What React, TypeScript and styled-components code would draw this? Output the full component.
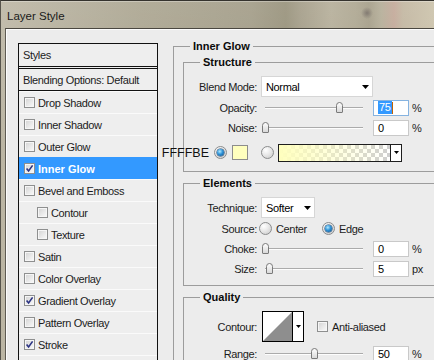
import React from "react";
import styled, { createGlobalStyle, css } from "styled-components";

const UI_FONT = `"Liberation Sans", Arial, sans-serif`;

const GlobalStyle = createGlobalStyle`
  * { box-sizing: border-box; }
  html, body { margin: 0; padding: 0; overflow: hidden; background: #ececec; }
  #root { width: 434px; height: 360px; }
`;

const Window = styled.div`
  width: 434px;
  height: 360px;
  overflow: hidden;
  display: flex;
  flex-direction: column;
  border-top: 1px solid #35332e;
  border-left: 1px solid #57544c;
  font-family: ${UI_FONT};
  background:
    radial-gradient(circle at 366px 12px, rgba(80, 70, 75, 0.45) 0, rgba(80, 70, 75, 0) 6px),
    linear-gradient(180deg, rgba(255, 255, 255, 0.1), rgba(255, 255, 255, 0) 40%),
    linear-gradient(
      90deg,
      #bcb6a4 0px,
      #b4ae9b 60px,
      #aaa48f 140px,
      #a59f8a 200px,
      #a19b86 250px,
      #969079 285px,
      #a39c87 300px,
      #b4ad98 330px,
      #aca58f 355px,
      #a39c86 368px,
      #b3ac96 380px,
      #c2a797 393px,
      #c1b59f 402px,
      #cbc2aa 434px
    );
`;

const TitleBar = styled.div`
  height: 27px;
  flex: none;
  display: flex;
  align-items: center;
  padding: 2px 0 0 6px;
  font-size: 11.5px;
  color: #1a1a1a;
  box-shadow: inset 0 1px 0 rgba(255, 255, 255, 0.3);
`;

const Body = styled.div`
  flex: 1;
  min-height: 0;
  overflow: hidden;
  margin-left: 4px;
  display: flex;
  align-items: flex-start;
  gap: 15px;
  padding: 11px 0 0 12px;
  background: #ececec;
  border-left: 1px solid #5e5b53;
  border-top: 1px solid #4a4740;
  box-shadow: inset 1px 1px 0 #fdfdfd;
`;

/* ---------- left style list ---------- */

const StyleList = styled.div`
  width: 140px;
  flex: none;
  margin-top: 3px;
  min-height: 340px;
  border: 1px solid #111;
  background: #eeeeee;
`;

const baseText = css`
  font-size: 11px;
  letter-spacing: -0.35px;
  color: #1c1c1c;
  white-space: nowrap;
`;

const ListHeader = styled.div<{ $h: number; $double?: boolean }>`
  ${baseText};
  height: ${(p) => p.$h}px;
  display: flex;
  align-items: center;
  padding-left: 4px;
  border-bottom: ${(p) => (p.$double ? "3px double #111" : "1px solid #111")};
  box-sizing: content-box;
`;

const EffectRow = styled.div<{ $indent?: boolean; $selected?: boolean }>`
  ${baseText};
  height: 22px;
  display: flex;
  align-items: center;
  gap: 3px;
  padding-left: ${(p) => (p.$indent ? 18 : 5)}px;
  border-top: 1px solid #fafafa;
  ${(p) =>
    p.$selected &&
    css`
      background: #3399ff;
      border-top-color: #3399ff;
      color: #ffffff;
      font-weight: bold;
      letter-spacing: 0;
    `}
`;

const CheckBox = styled.span`
  width: 11px;
  height: 11px;
  flex: none;
  display: flex;
  align-items: center;
  justify-content: center;
  border: 1px solid #8e8f8f;
  background: linear-gradient(135deg, #d2d2d2 0%, #e9e9e9 55%, #fbfbfb 100%);
  box-shadow: inset 0 0 0 1px #f6f6f6;
`;

const Check: React.FC<{ on?: boolean }> = ({ on }) => (
  <CheckBox>
    {on && (
      <svg width="9" height="9" viewBox="0 0 9 9">
        <path d="M1.6 4.4 L3.6 7 L7.6 1.4" fill="none" stroke="#2b3383" strokeWidth="1.6" />
      </svg>
    )}
  </CheckBox>
);

/* ---------- right settings panel ---------- */

const Group = styled.fieldset<{ $wide?: boolean }>`
  margin: 0;
  padding: 0;
  min-width: 0;
  border: 1px solid #9c9c9c;
  ${(p) =>
    p.$wide &&
    css`
      width: 290px;
      flex: none;
    `}
`;

const Legend = styled.legend`
  margin-left: 16px;
  padding: 0 3px;
  font: bold 11px/13px ${UI_FONT};
  color: #0a0a0a;
`;

const GroupStack = styled.div`
  display: flex;
  flex-direction: column;
  gap: 5px;
  padding: 3px 9px 0 9px;
`;

const Rows = styled.div<{ $pt: number; $pb: number }>`
  display: flex;
  flex-direction: column;
  padding: ${(p) => p.$pt}px 0 ${(p) => p.$pb}px 0;
`;

const Row = styled.div<{ $h: number; $mt?: number }>`
  height: ${(p) => p.$h}px;
  margin-top: ${(p) => p.$mt ?? 0}px;
  display: flex;
  align-items: center;
`;

const Label = styled.span`
  ${baseText};
  width: 73px;
  flex: none;
  margin-right: 4px;
  text-align: right;
`;

const Select = styled.div<{ $w: number }>`
  ${baseText};
  color: #000;
  width: ${(p) => p.$w}px;
  height: 21px;
  flex: none;
  display: flex;
  align-items: center;
  justify-content: space-between;
  padding: 0 3px 0 4px;
  background: #fff;
  border: 1px solid #d6d6d6;
`;

const Arrow: React.FC<{ w?: number }> = ({ w = 7 }) => (
  <svg width={w} height={Math.ceil(w / 2)} viewBox={`0 0 ${w} ${Math.ceil(w / 2)}`}>
    <polygon points={`0,0 ${w},0 ${w / 2},${Math.ceil(w / 2)}`} fill="#000" />
  </svg>
);

const SliderWrap = styled.div`
  position: relative;
  width: 106px;
  height: 12px;
  flex: none;
  margin-right: 6px;
  display: flex;
  align-items: center;
  padding: 0 4px;
`;

const Track = styled.div`
  flex: 1;
  height: 2px;
  border-top: 1px solid #ababab;
  border-bottom: 1px solid #fdfdfd;
`;

const Thumb = styled.div`
  position: absolute;
  top: 0;
  width: 7px;
  height: 11px;
  border: 1px solid #7a7a7a;
  border-radius: 3.5px 3.5px 1px 1px;
  background: linear-gradient(180deg, #fdfdfd, #d9d9d9);
`;

const Slider: React.FC<{ pct: number }> = ({ pct }) => (
  <SliderWrap>
    <Track />
    <Thumb style={{ left: `${1 + (pct / 100) * 97}px` }} />
  </SliderWrap>
);

const NumBox = styled.div<{ $focus?: boolean }>`
  ${baseText};
  color: #000;
  width: 36px;
  height: 16px;
  flex: none;
  display: flex;
  align-items: center;
  padding-left: 4px;
  margin-right: 3px;
  background: #fff;
  border: 1px solid ${(p) => (p.$focus ? "#86b3e0" : "#c9c9c9")};
`;

const Selected = styled.span`
  background: #3399ff;
  color: #fff;
  padding: 0 1px;
  line-height: 13px;
`;

const Caret = styled.span`
  width: 1px;
  height: 12px;
  background: #c46200;
`;

const Unit = styled.span`
  ${baseText};
`;

const NumberField: React.FC<{ label: string; value: string; pct: number; unit: string; focus?: boolean }> = ({
  label,
  value,
  pct,
  unit,
  focus,
}) => (
  <>
    <Label>{label}</Label>
    <Slider pct={pct} />
    <NumBox $focus={focus}>
      {focus ? (
        <>
          <Selected>{value}</Selected>
          <Caret />
        </>
      ) : (
        value
      )}
    </NumBox>
    <Unit>{unit}</Unit>
  </>
);

const Radio = styled.span<{ $on?: boolean }>`
  position: relative;
  width: 13px;
  height: 13px;
  flex: none;
  border-radius: 50%;
  border: 1px solid #8b8c8d;
  background: radial-gradient(circle at 35% 30%, #ffffff 0%, #e8e8e8 45%, #c6c6c6 100%);
  ${(p) =>
    p.$on &&
    css`
      &::after {
        content: "";
        position: absolute;
        left: 2px;
        top: 2px;
        width: 7px;
        height: 7px;
        border-radius: 50%;
        background: radial-gradient(circle at 40% 35%, #b4ebff 0%, #2f93d8 45%, #0b4a83 100%);
        box-shadow: 0 0 0 0.5px #173f66;
      }
    `}
`;

const RadioGroup = styled.div`
  display: flex;
  align-items: center;
  margin-left: -2px;
`;

const RadioText = styled.span<{ $gap?: number }>`
  ${baseText};
  margin-left: 4px;
  margin-right: ${(p) => p.$gap ?? 0}px;
`;

const ColorPick = styled.div`
  position: relative;
  display: flex;
  align-items: center;
  margin-left: 30px;
`;

const ColorCode = styled.span`
  position: absolute;
  right: calc(100% + 5px);
  top: 50%;
  transform: translateY(-50%);
  font-size: 12.5px;
  color: #111;
  white-space: nowrap;
`;

const Swatch = styled.span`
  width: 16px;
  height: 15px;
  flex: none;
  margin-left: 5px;
  margin-right: 13px;
  background: #ffffbe;
  border: 1px solid #8d8d8d;
`;

const GradientPick = styled.div`
  width: 124px;
  height: 18px;
  flex: none;
  margin-left: 4px;
  display: flex;
  border: 1px solid #1e1e1e;
`;

const GradientPreview = styled.div`
  flex: 1;
  border-right: 1px solid #1e1e1e;
  background-color: #ffffff;
  background-image: linear-gradient(90deg, #ffffbe 0%, rgba(255, 255, 190, 0.6) 40%, rgba(255, 255, 190, 0) 100%),
    linear-gradient(45deg, #cfcfcf 25%, transparent 25%, transparent 75%, #cfcfcf 75%),
    linear-gradient(45deg, #cfcfcf 25%, transparent 25%, transparent 75%, #cfcfcf 75%);
  background-size: 100% 100%, 8px 8px, 8px 8px;
  background-position: 0 0, 0 0, 4px 4px;
`;

const DropSide = styled.div<{ $w: number }>`
  width: ${(p) => p.$w}px;
  flex: none;
  display: flex;
  align-items: center;
  justify-content: center;
  background: #fff;
`;

const ContourPick = styled.div`
  width: 42px;
  height: 31px;
  flex: none;
  margin-left: 1px;
  display: flex;
  border: 1px solid #000;
  background: #fff;
`;

const ContourPreview = styled.div`
  width: 30px;
  flex: none;
  display: flex;
  border-right: 1px solid #000;
`;

const CheckOption = styled.label`
  ${baseText};
  display: flex;
  align-items: center;
  gap: 4px;
  margin-left: 13px;
`;

type Effect = { name: string; checked?: boolean; indent?: boolean; selected?: boolean };

const effects: Effect[] = [
  { name: "Drop Shadow" },
  { name: "Inner Shadow" },
  { name: "Outer Glow" },
  { name: "Inner Glow", checked: true, selected: true },
  { name: "Bevel and Emboss" },
  { name: "Contour", indent: true },
  { name: "Texture", indent: true },
  { name: "Satin" },
  { name: "Color Overlay" },
  { name: "Gradient Overlay", checked: true },
  { name: "Pattern Overlay" },
  { name: "Stroke", checked: true },
];

export default function App() {
  return (
    <>
      <GlobalStyle />
      <Window>
        <TitleBar>Layer Style</TitleBar>
        <Body>
          <StyleList>
            <ListHeader $h={22} $double>
              Styles
            </ListHeader>
            <ListHeader $h={21}>Blending Options: Default</ListHeader>
            {effects.map((e) => (
              <EffectRow key={e.name} $indent={e.indent} $selected={e.selected}>
                <Check on={e.checked} />
                {e.name}
              </EffectRow>
            ))}
            <EffectRow />
          </StyleList>

          <Group $wide>
            <Legend>Inner Glow</Legend>
            <GroupStack>
              <Group>
                <Legend>Structure</Legend>
                <Rows $pt={7} $pb={9}>
                  <Row $h={21}>
                    <Label>Blend Mode:</Label>
                    <Select $w={112}>
                      Normal
                      <Arrow />
                    </Select>
                  </Row>
                  <Row $h={21}>
                    <NumberField label="Opacity:" value="75" pct={76} unit="%" focus />
                  </Row>
                  <Row $h={20}>
                    <NumberField label="Noise:" value="0" pct={0} unit="%" />
                  </Row>
                  <Row $h={19} $mt={5}>
                    <ColorPick>
                      <ColorCode>FFFFBE</ColorCode>
                      <Radio $on />
                      <Swatch />
                      <Radio />
                      <GradientPick>
                        <GradientPreview />
                        <DropSide $w={10}>
                          <Arrow w={5} />
                        </DropSide>
                      </GradientPick>
                    </ColorPick>
                  </Row>
                </Rows>
              </Group>

              <Group>
                <Legend>Elements</Legend>
                <Rows $pt={7} $pb={6}>
                  <Row $h={21}>
                    <Label>Technique:</Label>
                    <Select $w={54}>
                      Softer
                      <Arrow />
                    </Select>
                  </Row>
                  <Row $h={21}>
                    <Label>Source:</Label>
                    <RadioGroup>
                      <Radio />
                      <RadioText $gap={15}>Center</RadioText>
                      <Radio $on />
                      <RadioText>Edge</RadioText>
                    </RadioGroup>
                  </Row>
                  <Row $h={20}>
                    <NumberField label="Choke:" value="0" pct={0} unit="%" />
                  </Row>
                  <Row $h={20}>
                    <NumberField label="Size:" value="5" pct={4} unit="px" />
                  </Row>
                </Rows>
              </Group>

              <Group>
                <Legend>Quality</Legend>
                <Rows $pt={7} $pb={20}>
                  <Row $h={31}>
                    <Label>Contour:</Label>
                    <ContourPick>
                      <ContourPreview>
                        <svg width="29" height="29" viewBox="0 0 29 29">
                          <polygon points="0,29 29,0 29,29" fill="#8e8e8e" />
                        </svg>
                      </ContourPreview>
                      <DropSide $w={10}>
                        <Arrow w={5} />
                      </DropSide>
                    </ContourPick>
                    <CheckOption>
                      <Check />
                      Anti-aliased
                    </CheckOption>
                  </Row>
                  <Row $h={20} $mt={2}>
                    <NumberField label="Range:" value="50" pct={50} unit="%" />
                  </Row>
                </Rows>
              </Group>
            </GroupStack>
          </Group>
        </Body>
      </Window>
    </>
  );
}
